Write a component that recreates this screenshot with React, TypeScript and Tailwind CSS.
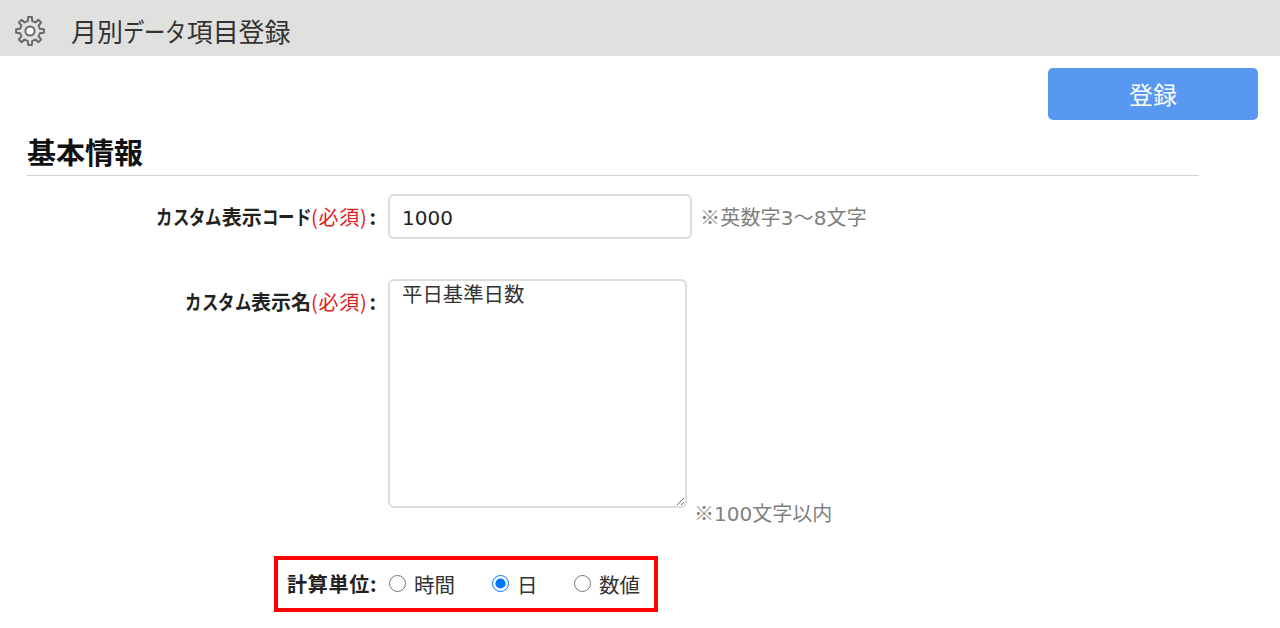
const cjk = "font-['Noto_Sans_CJK_JP','Liberation_Sans',sans-serif]";
const num = "font-['DejaVu_Sans',sans-serif] text-[20px] tracking-[0px]";

function gearPath() {
  const pts: string[] = [];
  const teeth = 8;
  for (let i = 0; i < teeth; i++) {
    const a = (i * Math.PI * 2) / teeth - Math.PI / 2;
    const step = (Math.PI * 2) / teeth;
    const ring: [number, number][] = [
      [10.2, a - step * 0.28],
      [14, a - step * 0.17],
      [14, a + step * 0.17],
      [10.2, a + step * 0.28],
    ];
    ring.forEach(([r, t]) => pts.push(`${(15 + r * Math.cos(t)).toFixed(2)} ${(15 + r * Math.sin(t)).toFixed(2)}`));
  }
  return `M${pts.join("L")}Z`;
}

function Gear() {
  return (
    <svg viewBox="0 0 30 30" className="h-[30px] w-[30px] shrink-0" fill="none">
      <path d={gearPath()} stroke="#6a6a6a" strokeWidth="2" strokeLinejoin="round" />
      <circle cx="15" cy="15" r="4.6" fill="#fbfbfb" stroke="#6a6a6a" strokeWidth="2" />
    </svg>
  );
}

function Kana({ children }: { children: string }) {
  return (
    <>
      {children.split("").map((c, i) => (
        <span key={i} className="inline-block w-[0.82em] origin-left scale-x-[0.82] text-left">
          {c}
        </span>
      ))}
    </>
  );
}

function Required() {
  return (
    <>
      <span className="font-normal tracking-[0.75px] text-[#e02020]">(必須)</span>
      <span className="ml-[2px]">:</span>
    </>
  );
}

function Choice({ label, checked, className }: { label: string; checked?: boolean; className: string }) {
  return (
    <label className={`flex items-center ${className}`}>
      <input type="radio" name="unit" defaultChecked={checked} className="m-0 -mt-[2px] h-[17px] w-[17px] shrink-0" />
      <span className="ml-[8px] text-[20.5px] leading-[28px] text-[#333]">{label}</span>
    </label>
  );
}

export default function App() {
  return (
    <div className={`h-[628px] w-[1280px] overflow-hidden bg-white text-[#222] ${cjk}`}>
      <header className="flex h-[56px] items-center bg-[#e0e0de] pl-[15px] pt-[6px]">
        <Gear />
        <h1 className="ml-[26px] text-[26px] font-normal leading-[34px] tracking-[-0.1px] text-[#333]">
          月別<Kana>データ</Kana>項目登録
        </h1>
      </header>

      <div className="flex justify-end pt-[12px] pr-[22px]">
        <button className="h-[52px] w-[210px] rounded-[5px] bg-[#5898f0] text-[24px] text-white">登録</button>
      </div>

      <h2 className="ml-[27px] mt-[13px] h-[43px] w-[1172px] border-b border-[#d2d2d2] text-[29px] font-bold leading-[37px] text-[#111]">
        基本情報
      </h2>

      <div className="mt-[18px] flex items-center">
        <div className="w-[376px] text-right text-[20px] font-bold leading-[28px]">
          <Kana>カスタム</Kana>表示<Kana>コード</Kana>
          <Required />
        </div>
        <input
          defaultValue="1000"
          className={`ml-[12px] h-[45px] w-[304px] rounded-[6px] border-2 border-[#dcdcdc] px-[12px] pt-[2px] text-[#222] outline-none ${num}`}
        />
        <span className="ml-[8px] pt-[2px] text-[20px] leading-[28px] tracking-[0.2px] text-[#808080]">
          ※英数字<span className={num}>3</span>〜<span className={num}>8</span>文字
        </span>
      </div>

      <div className="mt-[40px] flex items-start">
        <div className="w-[376px] pt-[9px] text-right text-[20px] font-bold leading-[28px]">
          <Kana>カスタム</Kana>表示名
          <Required />
        </div>
        <textarea
          defaultValue="平日基準日数"
          className="ml-[12px] h-[229px] w-[299px] rounded-[6px] border-2 border-[#dcdcdc] px-[12px] text-[20.4px] leading-[24px] text-[#333] outline-none"
        />
        <span className="ml-[7px] mt-[220px] text-[20px] leading-[28px] text-[#808080]">
          ※<span className={num}>100</span>文字以内
        </span>
      </div>

      <div className="ml-[274px] mt-[28px] flex h-[56px] w-[384px] items-center border-4 border-[#ff0000] pl-[9px]">
        <div className="w-[89px] shrink-0 whitespace-nowrap text-right text-[20px] font-bold leading-[28px] tracking-[0.75px]">計算単位:</div>
        <Choice label="時間" className="ml-[13px] w-[103px]" />
        <Choice label="日" checked className="w-[82px]" />
        <Choice label="数値" className="" />
      </div>
    </div>
  );
}
